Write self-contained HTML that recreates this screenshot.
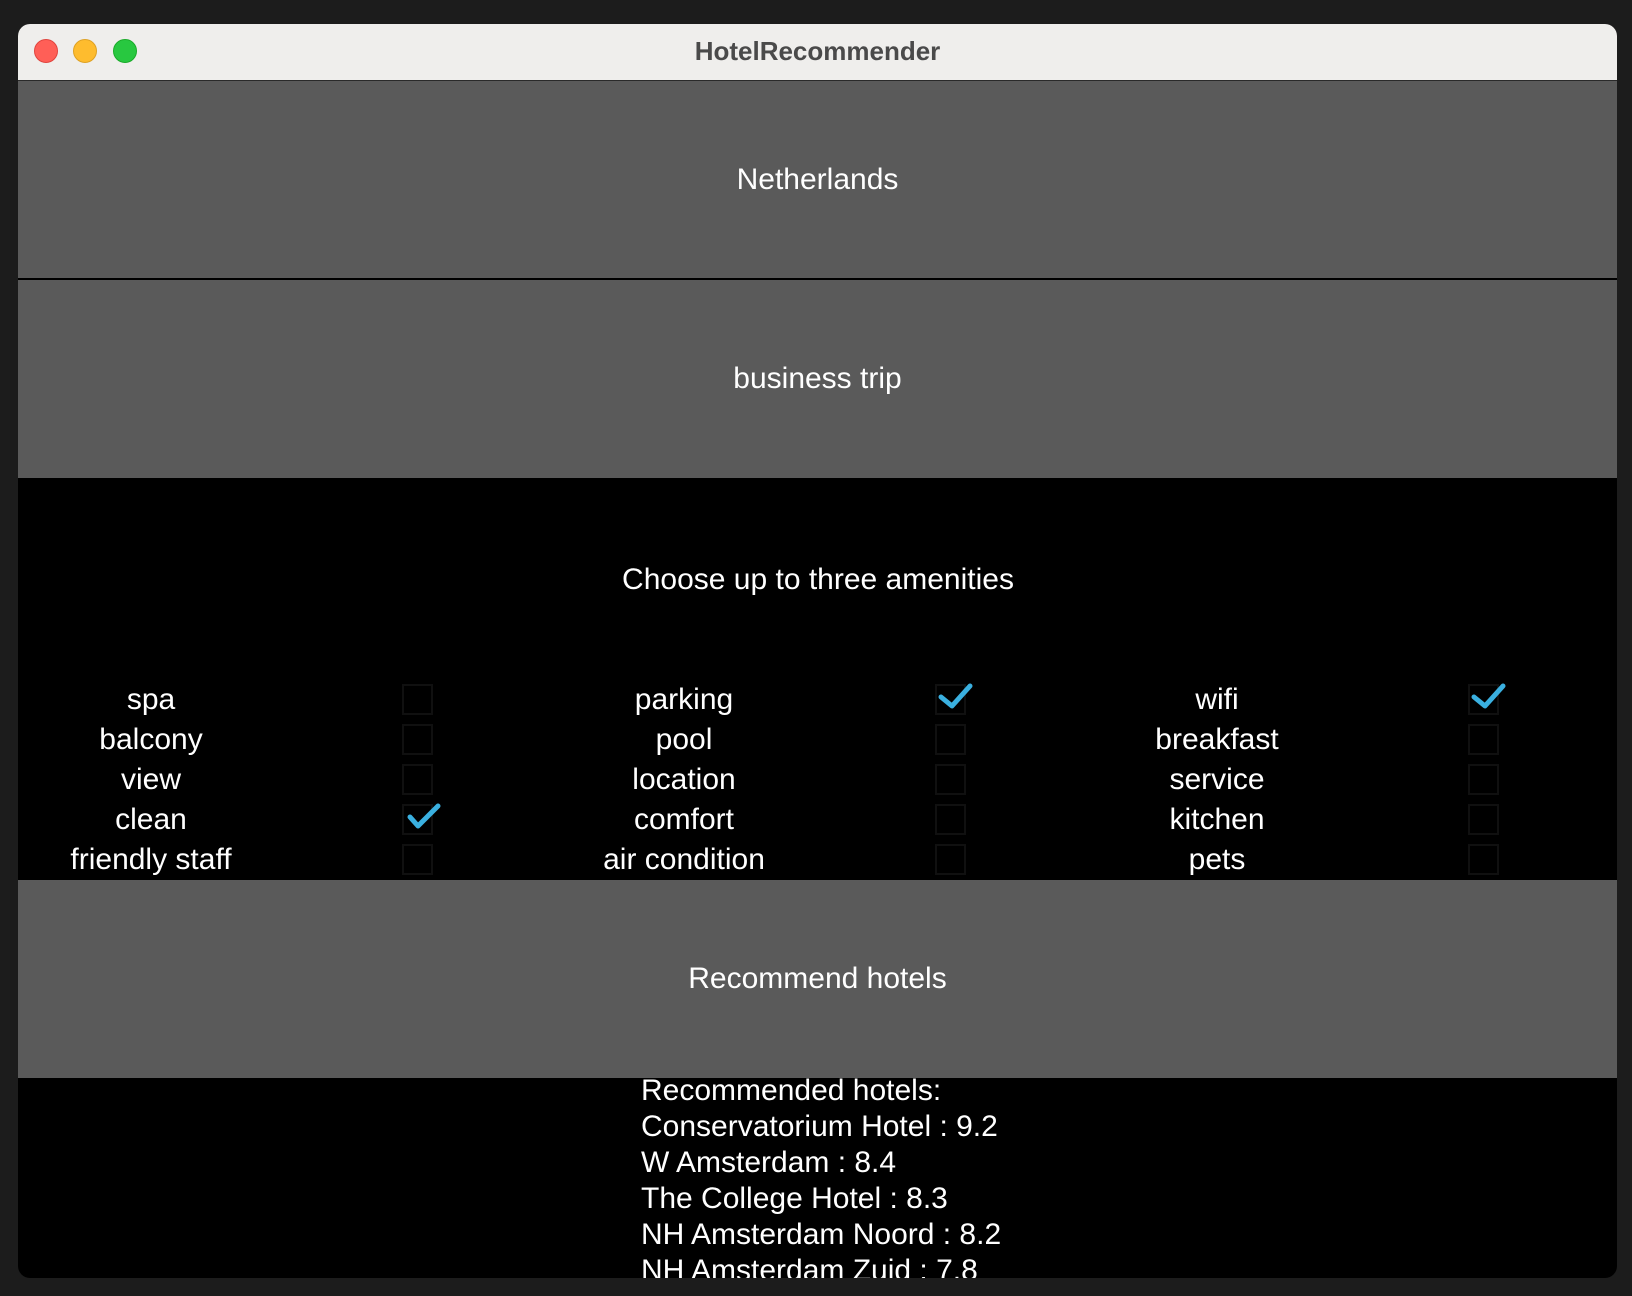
<!DOCTYPE html>
<html><head><style>
body{margin:0;width:1632px;height:1296px;background:#1c1c1c;position:relative;overflow:hidden;font-family:"Liberation Sans",sans-serif}
.win{position:absolute;left:18px;top:24px;width:1599px;height:1254px;border-radius:12px;overflow:hidden;background:#000}
.tb{position:absolute;left:0;top:0;width:100%;height:56px;background:#efeeec;border-bottom:1px solid #2a2a2a}
.tl{position:absolute;top:15px;width:24px;height:24px;border-radius:50%;box-sizing:border-box}
.title{position:absolute;left:0;width:100%;top:0;line-height:54px;text-align:center;font-weight:bold;font-size:26px;color:#4a4a4a}
.btn{position:absolute;left:0;width:100%;background:#5a5a5a;color:#fff;font-size:30px;text-align:center}
.t{position:absolute;color:#fff;font-size:30px;text-align:center;width:400px;line-height:40px}
.cb{position:absolute;width:31px;height:31px;border:2px solid #101010;box-sizing:border-box}
.res{position:absolute;left:623px;top:1049px;color:#fff;font-size:30px;line-height:36px;white-space:pre}
</style></head><body>
<div class="win">
<div class="tb">
<div class="tl" style="left:16px;background:#ff5f57;border:1px solid #e0443e"></div>
<div class="tl" style="left:55px;background:#febc2e;border:1px solid #dea123"></div>
<div class="tl" style="left:95px;background:#28c840;border:1px solid #1aab29"></div>
<div class="title">HotelRecommender</div>
</div>
<div class="btn" style="top:57px;height:197px;line-height:197px">Netherlands</div>
<div class="btn" style="top:256px;height:198px;line-height:198px">business trip</div>
<div class="t" style="left:600px;top:536px">Choose up to three amenities</div>

<div class="t" style="left:-67px;top:656px">spa</div>
<div class="t" style="left:-67px;top:696px">balcony</div>
<div class="t" style="left:-67px;top:736px">view</div>
<div class="t" style="left:-67px;top:776px">clean</div>
<div class="t" style="left:-67px;top:816px">friendly staff</div>
<div class="t" style="left:466px;top:656px">parking</div>
<div class="t" style="left:466px;top:696px">pool</div>
<div class="t" style="left:466px;top:736px">location</div>
<div class="t" style="left:466px;top:776px">comfort</div>
<div class="t" style="left:466px;top:816px">air condition</div>
<div class="t" style="left:999px;top:656px">wifi</div>
<div class="t" style="left:999px;top:696px">breakfast</div>
<div class="t" style="left:999px;top:736px">service</div>
<div class="t" style="left:999px;top:776px">kitchen</div>
<div class="t" style="left:999px;top:816px">pets</div>

<div class="cb" style="left:384px;top:660px"></div>
<div class="cb" style="left:384px;top:700px"></div>
<div class="cb" style="left:384px;top:740px"></div>
<div class="cb" style="left:384px;top:780px"></div>
<div class="cb" style="left:384px;top:820px"></div>
<div class="cb" style="left:917px;top:660px"></div>
<div class="cb" style="left:917px;top:700px"></div>
<div class="cb" style="left:917px;top:740px"></div>
<div class="cb" style="left:917px;top:780px"></div>
<div class="cb" style="left:917px;top:820px"></div>
<div class="cb" style="left:1450px;top:660px"></div>
<div class="cb" style="left:1450px;top:700px"></div>
<div class="cb" style="left:1450px;top:740px"></div>
<div class="cb" style="left:1450px;top:780px"></div>
<div class="cb" style="left:1450px;top:820px"></div>
<svg style="position:absolute;left:0;top:0" width="1599" height="1254">
<g fill="none" stroke="#3ab0e0" stroke-width="5" stroke-linecap="round" stroke-linejoin="round">
<polyline points="392,793 400,802 420,782"/>
<polyline points="923,673 934,682 952,662"/>
<polyline points="1456,673 1467,682 1485,662"/>
</g></svg>
<div class="btn" style="top:856px;height:198px;line-height:198px">Recommend hotels</div>
<div class="res">Recommended hotels:
Conservatorium Hotel : 9.2
W Amsterdam : 8.4
The College Hotel : 8.3
NH Amsterdam Noord : 8.2
NH Amsterdam Zuid : 7.8</div>
</div>
</body></html>
